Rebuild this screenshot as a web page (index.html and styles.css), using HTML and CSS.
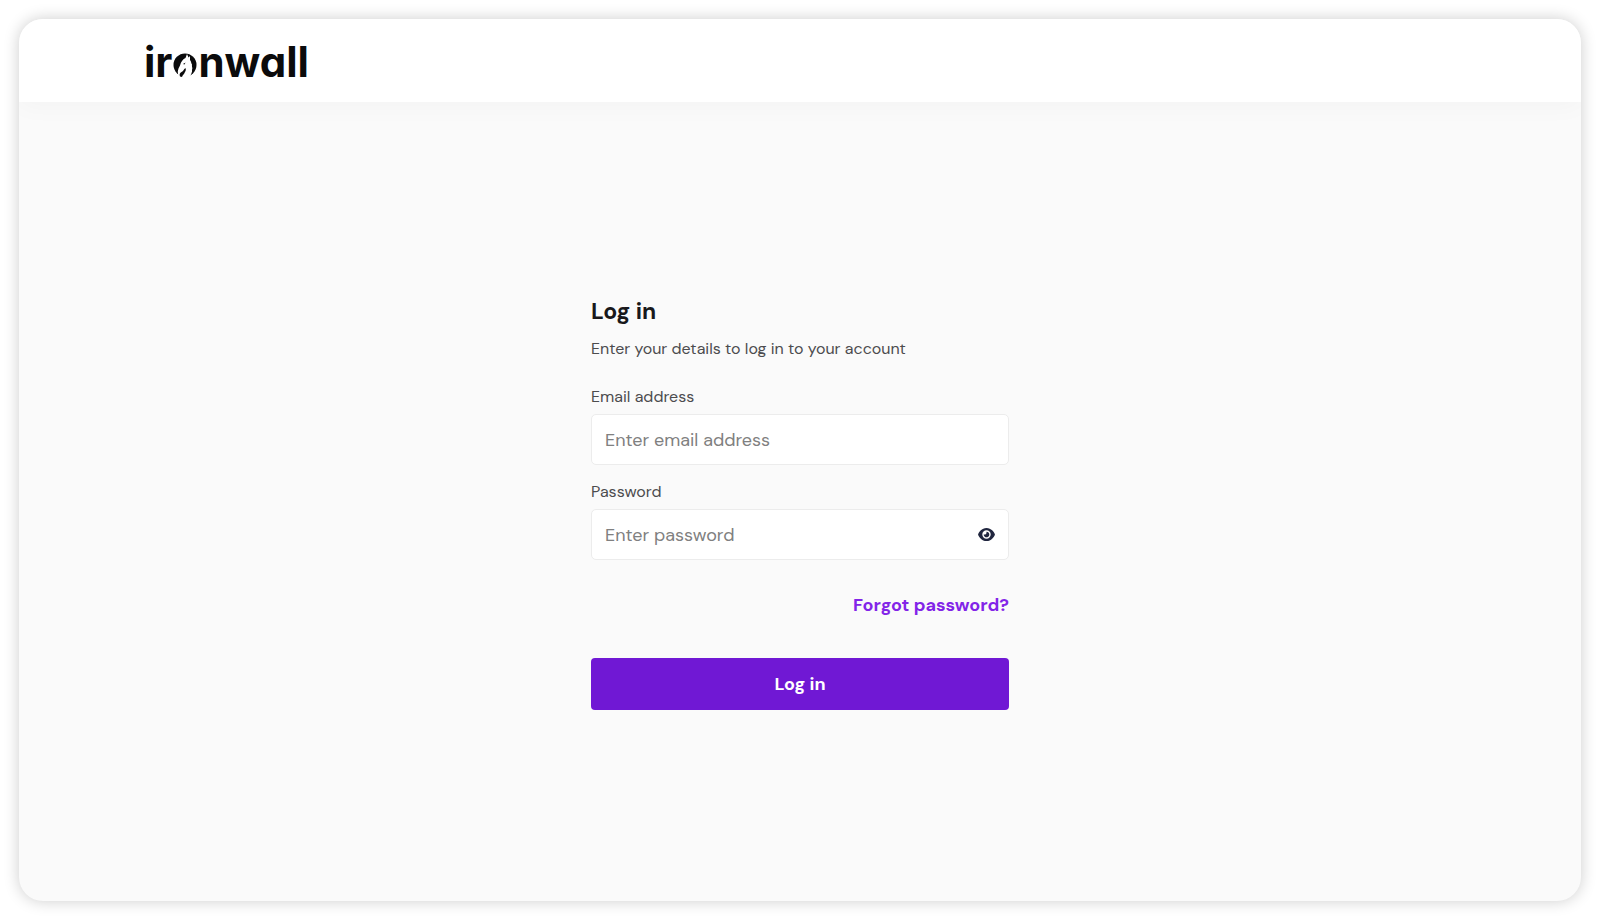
FILE: index.html
```html
<!DOCTYPE html>
<html lang="en">
<head>
    <meta charset="utf-8" />
    <meta name="viewport" content="width=device-width, initial-scale=1" />
    <title>Log in</title>
    <link rel="stylesheet" href="styles.css">
</head>
<body>
<div class="page">

    <header class="header">
        <a class="logo" href="/" aria-label="ironwall"><span>ir</span>
            <!-- the "o", with a horse head cut out of the ring -->
            <svg class="logo-o" viewBox="0 0 48 48" aria-hidden="true">
                <circle cx="24" cy="24" r="23" fill="#0b0b0c"/>
                <path fill="#fff" d="M12 48 C8 40 9 33 14 25 C16 17 20 12 25 10 L28 2 L31 9 L34 6 L34 14 C37 18 36 20 38 23 C37 27 40 30 38 34 C39 38 36 43 33 48 Z"/>
                <path fill="#0b0b0c" d="M14 47 C12 43 14 39 17 38 C21 36 21 33 25 30 C27 35 24 37 23 40 C22 43 19 44 18 48 Z"/>
                <path fill="#0b0b0c" d="M20 22 L25 19 L23 23 Z"/>
            </svg>
            <span>nwall</span></a>
    </header>

    <main class="content">
        <form class="login">
            <h1>Log in</h1>
            <p class="intro">Enter your details to log in to your account</p>

            <div class="field">
                <label for="email">Email address</label>
                <input id="email" type="email" placeholder="Enter email address">
            </div>

            <div class="field">
                <label for="password">Password</label>
                <div class="input-box">
                    <input id="password" type="password" placeholder="Enter password">
                    <button class="show" type="button" aria-label="Show password">
                        <svg viewBox="0 0 576 512" aria-hidden="true">
                            <path fill="#20263f" fill-rule="evenodd" d="M288 32c-81 0-146 37-193 80C48 156 17 208 3 244c-3 8-3 17 0 25 14 35 45 87 92 131 47 44 112 80 193 80s146-37 193-80c47-44 78-96 92-131 3-8 3-17 0-25-14-36-45-88-92-132-47-43-112-80-193-80zM144 256a144 144 0 1 1 288 0 144 144 0 1 1-288 0z"/>
                            <path fill="#20263f" d="M288 192c0 35-29 64-64 64-7 0-14-1-20-3-6-2-12 1-12 7 0 7 1 14 3 21 14 51 66 82 118 68s82-66 68-118c-11-41-47-69-88-71-6 0-9 6-7 12 1 6 2 13 2 20z"/>
                        </svg>
                    </button>
                </div>
            </div>

            <a class="forgot" href="#">Forgot password?</a>
            <button class="submit" type="submit">Log in</button>
        </form>
    </main>

</div>
</body>
</html>
```

FILE: styles.css
```css
* {
    box-sizing: border-box;
}

body {
    margin: 0;
    padding: 19px;
    background: #fff;
    color: #4c4c4e;
    font-family: "DM Sans", Lato, sans-serif;
    font-size: 16px;
    line-height: 24px;
}

.page {
    display: flex;
    flex-direction: column;
    min-height: calc(100vh - 38px);
    border-radius: 24px;
    overflow: hidden;
    background: #fafafa;
    box-shadow: 0 0 16px rgba(0, 0, 0, .2);
}

/* top bar */
.header {
    display: flex;
    align-items: center;
    height: 83px;
    padding: 0 8%;
    background: #fff;
    box-shadow: 0 4px 24px rgba(0, 0, 0, .03);
}

.logo {
    display: flex;
    align-items: center;
    padding-top: 2px;
    color: #0b0b0c;
    font-family: Inter, sans-serif;
    font-size: 42px;
    font-weight: 700;
    line-height: 48px;
    text-decoration: none;
    /* single-storey a */
    font-feature-settings: "cv11";
}

.logo-o {
    width: 24px;
    height: 24px;
    margin: 6px 1px 0;
}

/* login form */
.content {
    flex: 1;
    display: flex;
    align-items: center;
    justify-content: center;
    padding: 26px 24px 24px;
}

.login {
    display: flex;
    flex-direction: column;
    width: 100%;
    max-width: 418px;
}

h1 {
    margin: 0 0 10px;
    color: #18181b;
    font-size: 23px;
    font-weight: 700;
    line-height: 32px;
}

.intro {
    margin: 0 0 24px;
}

.field {
    display: flex;
    flex-direction: column;
    gap: 5px;
    margin-bottom: 15px;
}

.field input {
    display: block;
    width: 100%;
    height: 51px;
    padding: 0 13px;
    border: 1px solid #ececec;
    border-radius: 5px;
    background: #fff;
    color: #18181b;
    font: inherit;
    font-size: 18px;
}

.field input::placeholder {
    color: #808080;
    opacity: 1;
}

.input-box {
    position: relative;
}

.input-box input {
    padding-right: 48px;
}

.show {
    position: absolute;
    top: 0;
    right: 7px;
    display: flex;
    align-items: center;
    justify-content: center;
    width: 32px;
    height: 51px;
    padding: 0;
    border: 0;
    background: none;
    cursor: pointer;
}

.show svg {
    width: 17px;
    height: 15px;
}

.forgot {
    align-self: flex-end;
    margin: 18px 0 41px;
    color: #8224e8;
    font-size: 18px;
    font-weight: 700;
    text-decoration: none;
}

.submit {
    height: 52px;
    border: 0;
    border-radius: 4px;
    background: #7018d4;
    color: #fff;
    font: inherit;
    font-size: 18px;
    font-weight: 700;
    cursor: pointer;
}
```
